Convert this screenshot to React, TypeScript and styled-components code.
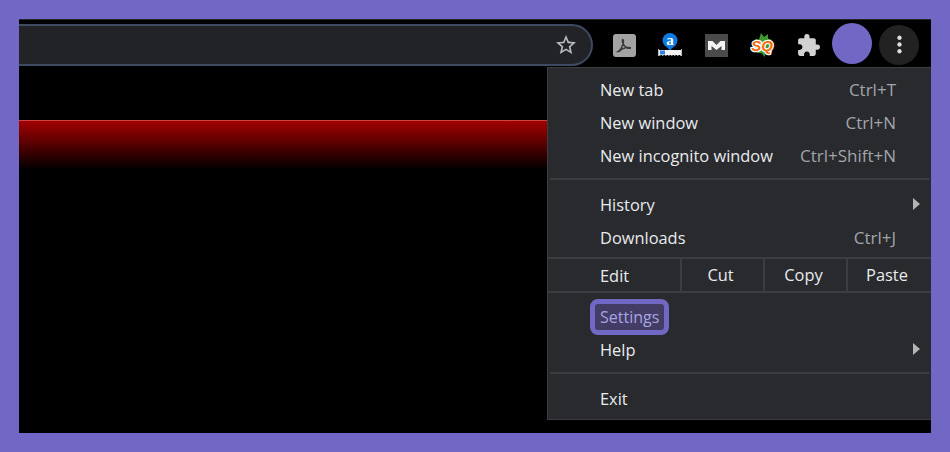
import styled, { createGlobalStyle } from 'styled-components'
import { MdExtension, MdMoreVert, MdStarBorder } from 'react-icons/md'

const GlobalStyle = createGlobalStyle`
  html, body {
    margin: 0;
    padding: 0;
    background: #7068c4;
  }
  * {
    box-sizing: border-box;
  }
`

type MenuEntry = { label: string; shortcut?: string; arrow?: boolean; highlight?: boolean }

const newItems: MenuEntry[] = [
  { label: 'New tab', shortcut: 'Ctrl+T' },
  { label: 'New window', shortcut: 'Ctrl+N' },
  { label: 'New incognito window', shortcut: 'Ctrl+Shift+N' },
]

const historyItems: MenuEntry[] = [
  { label: 'History', arrow: true },
  { label: 'Downloads', shortcut: 'Ctrl+J' },
]

const settingsItems: MenuEntry[] = [
  { label: 'Settings', highlight: true },
  { label: 'Help', arrow: true },
]

function MenuRows({ items }: { items: MenuEntry[] }) {
  return (
    <>
      {items.map(item => (
        <Row key={item.label}>
          {item.highlight ? <Highlight>{item.label}</Highlight> : <span>{item.label}</span>}
          {item.shortcut && <Shortcut>{item.shortcut}</Shortcut>}
          {item.arrow && <Arrow />}
        </Row>
      ))}
    </>
  )
}

function PdfIcon() {
  return (
    <svg width="23" height="23" viewBox="0 0 23 23">
      <rect width="23" height="23" rx="3" fill="#a3a3a3" />
      <path
        d="M5 17.500c2.500-1.500 4.500-5 5.300-8.500.3-1.500.2-3.500-.5-3.500s-.6 2.500.2 4c1 2 2.500 3.700 4.500 4.500 1 .4 3 .5 3 0 0-.7-3-.6-5-.2-2 .4-5 2-6.500 3.700z"
        fill="none"
        stroke="#3a3a3a"
        strokeWidth="1.400"
      />
    </svg>
  )
}

function AmazonIcon() {
  return (
    <svg width="24" height="24" viewBox="0 0 24 24">
      <circle cx="12" cy="7.500" r="7.500" fill="#0d7be0" />
      <path d="M12 17.500l-3-3.500h6z" fill="#0d7be0" />
      <text x="12" y="12" textAnchor="middle" fontFamily="Liberation Serif, serif" fontWeight="700" fontSize="15" fill="#fff">
        a
      </text>
      <rect x="1" y="17" width="22" height="5" fill="#f2f2f2" />
      <rect x="2" y="17.500" width="5" height="4" fill="#2c86e0" />
      <path d="M.5 16v7M23.500 16v7" stroke="#bbb" strokeWidth="1" />
      <path d="M1 22.500h22" stroke="#999" strokeWidth="1" strokeDasharray="1.500 1.500" />
    </svg>
  )
}

function MediumIcon() {
  return (
    <svg width="23" height="23" viewBox="0 0 23 23">
      <rect width="23" height="23" fill="#4a4b4a" />
      <path d="M3 16V7h4.500l4 4 4-4H20v9h-3.500v-4l-5 4-5-4v4z" fill="#f4f4f4" />
    </svg>
  )
}

function SqIcon() {
  return (
    <svg width="25" height="24" viewBox="0 0 25 24">
      <path d="M5 6l4 .5L11 0l3 4 4-3v4.500l3 1-2 12-3 .5-1.500 5-2.500-3.500-5-1z" fill="#3f9a2d" />
      <text
        x="12"
        y="17.500"
        textAnchor="middle"
        fontFamily="Liberation Sans, sans-serif"
        fontStyle="italic"
        fontWeight="700"
        fontSize="15"
        fill="#f26a0f"
        stroke="#fff"
        strokeWidth="2.500"
        paintOrder="stroke"
      >
        SQ
      </text>
    </svg>
  )
}

export default function App() {
  return (
    <>
      <GlobalStyle />
      <Frame>
        <Window>
          <Toolbar>
            <AddressBar>
              <MdStarBorder size={24} color="#b9bcbf" />
            </AddressBar>
            <Extensions>
              <Extension>
                <PdfIcon />
              </Extension>
              <Extension>
                <AmazonIcon />
              </Extension>
              <Extension>
                <MediumIcon />
              </Extension>
              <Extension>
                <SqIcon />
              </Extension>
              <Extension>
                <MdExtension size={25} color="#d2d2d2" />
              </Extension>
            </Extensions>
            <Avatar />
            <MoreButton>
              <MdMoreVert size={27} color="#dedede" />
            </MoreButton>
          </Toolbar>
          <Page>
            <RedBand />
            <Menu>
              <MenuRows items={newItems} />
              <Separator />
              <MenuRows items={historyItems} />
              <EditRow>
                <EditLabel>Edit</EditLabel>
                <EditCell>Cut</EditCell>
                <EditCell>Copy</EditCell>
                <EditCell>Paste</EditCell>
              </EditRow>
              <SettingsGroup>
                <MenuRows items={settingsItems} />
              </SettingsGroup>
              <Separator />
              <Row>
                <span>Exit</span>
              </Row>
            </Menu>
          </Page>
        </Window>
      </Frame>
    </>
  )
}

const Frame = styled.div`
  width: 950px;
  height: 452px;
  padding: 19px;
  background: #7068c4;
  font-family: 'Open Sans', 'Noto Sans', sans-serif;
`

const Window = styled.div`
  display: flex;
  flex-direction: column;
  width: 912px;
  height: 414px;
  background: #000;
  overflow: hidden;
`

const Toolbar = styled.div`
  display: flex;
  flex: none;
  align-items: center;
  height: 48px;
  padding-right: 12px;
  border-top: 1px solid #2b2626;
`

const AddressBar = styled.div`
  display: flex;
  align-items: center;
  justify-content: flex-end;
  width: 574px;
  height: 42px;
  margin-top: 3px;
  padding-right: 13px;
  background: #212326;
  border: 2px solid #3e4a62;
  border-left: 0;
  border-radius: 0 21px 21px 0;
`

const Extensions = styled.div`
  display: flex;
  margin-left: 8px;
`

const Extension = styled.div`
  display: flex;
  align-items: center;
  justify-content: center;
  width: 46px;
  height: 24px;
  margin-top: 3px;
`

const Avatar = styled.div`
  width: 40px;
  height: 41px;
  margin-left: 1px;
  margin-right: 1px;
  border-radius: 50%;
  background: #7068c4;
`

const MoreButton = styled.div`
  display: flex;
  align-items: center;
  justify-content: center;
  width: 40px;
  height: 40px;
  margin-left: 6px;
  margin-top: 2px;
  border-radius: 50%;
  background: #222222;
`

const Page = styled.div`
  position: relative;
  flex: 1;
  padding-top: 53px;
`

const RedBand = styled.div`
  height: 50px;
  background: linear-gradient(to bottom, #a30000, #000);
  border-top: 1px solid #c44;
`

const Menu = styled.div`
  position: absolute;
  top: 0;
  right: 0;
  width: 384px;
  height: 353px;
  padding-top: 6px;
  background: #292a2d;
  border: 1px solid #3c3d40;
  border-right: 0;
  color: #e8eaed;
  font-size: 16.4px;
  font-weight: 500;
`

const Row = styled.div`
  position: relative;
  display: flex;
  align-items: center;
  justify-content: space-between;
  height: 33px;
  padding: 0 35px 2px 52px;
`

const Shortcut = styled.span`
  color: #a0a5aa;
  font-size: 17px;
  font-weight: 400;
`

const Arrow = styled.span`
  position: absolute;
  top: 9px;
  right: 11px;
  border-left: 7px solid #b4b5b7;
  border-top: 6px solid transparent;
  border-bottom: 6px solid transparent;
`

const Highlight = styled.span`
  margin-left: -10px;
  padding: 2px 5px;
  border: 5px solid #7068c4;
  border-radius: 8px;
  background: #433d66;
  color: #a9a4e2;
  font-size: 16px;
`

const Separator = styled.div`
  height: 2px;
  margin: 5px 2px 9px;
  background: #3c3d40;
`

const EditRow = styled.div`
  display: grid;
  grid-template-columns: 132px 83px 83px 84px;
  height: 36px;
  margin-top: 2px;
  border-top: 2px solid #3c3d40;
  border-bottom: 2px solid #3c3d40;
`

const EditLabel = styled.div`
  display: flex;
  align-items: center;
  padding-left: 52px;
`

const EditCell = styled.div`
  display: flex;
  align-items: center;
  justify-content: center;
  padding: 0 4px 2px 0;
  border-left: 2px solid #3c3d40;
`

const SettingsGroup = styled.div`
  margin-top: 8px;
`
